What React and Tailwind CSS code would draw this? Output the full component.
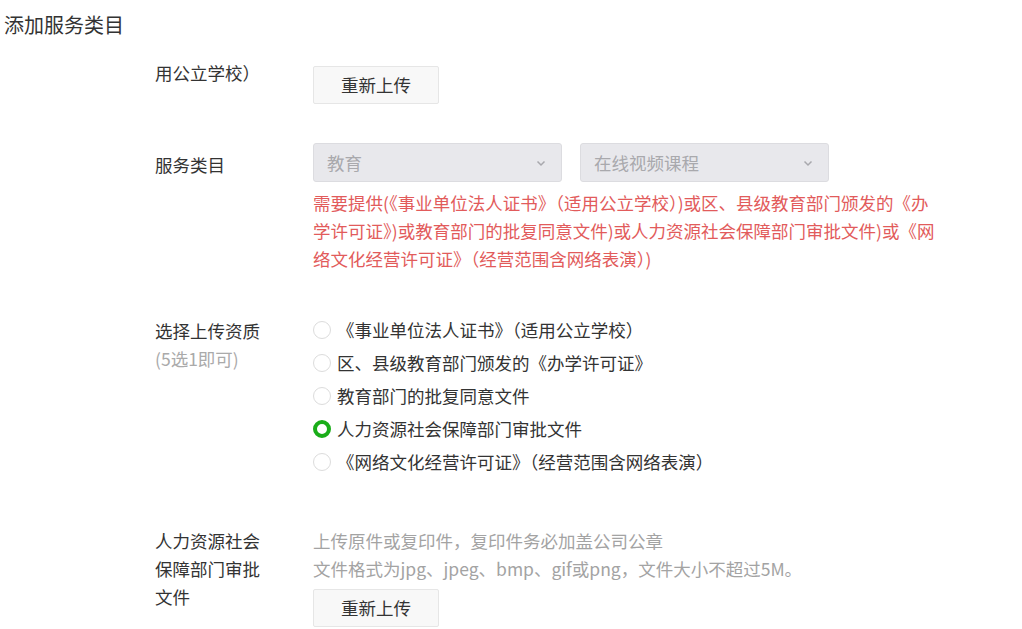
import React, { useState } from "react";

const options = [
  "《事业单位法人证书》（适用公立学校）",
  "区、县级教育部门颁发的《办学许可证》",
  "教育部门的批复同意文件",
  "人力资源社会保障部门审批文件",
  "《网络文化经营许可证》（经营范围含网络表演）",
];

const Chevron = () => (
  <svg width="12" height="12" viewBox="0 0 12 12" fill="none">
    <path d="M2.5 4.5l3.5 3.5 3.5-3.5" stroke="#a8a8ad" strokeWidth="1.5" />
  </svg>
);

const UploadButton = ({ className }) => (
  <button
    className={`h-[38px] w-[126px] rounded-[2px] border border-[#e6e6e6] bg-[#f8f8f8] text-[17.5px] text-[#333] ${className}`}
  >
    重新上传
  </button>
);

const App = () => {
  const [selected, setSelected] = useState(3);

  return (
    <div
      className="min-h-screen w-[1022px] bg-white text-[17.5px] leading-[28px] text-[#333]"
      style={{ fontFamily: '"Noto Sans CJK SC", "Noto Sans", sans-serif' }}
    >
      {/* title */}
      <div className="mt-[11px] pl-[4px] text-[20px] leading-[28px]">
        添加服务类目
      </div>

      <div className="pl-[155px]">
        {/* row: previous upload */}
        <div className="mt-[20px] flex items-start">
          <div className="w-[158px] shrink-0">用公立学校）</div>
          <UploadButton className="mt-[7px]" />
        </div>

        {/* row: service category */}
        <div className="mt-[39px] flex items-start">
          <div className="w-[158px] shrink-0 pt-[8px]">服务类目</div>
          <div>
            <div className="flex gap-[18px]">
              <div className="flex h-[39px] w-[249px] items-center justify-between rounded-[3px] border border-[#dcdce0] bg-[#e8e8ec] pl-[13px] pr-[14px] text-[#a9a9ad]">
                <span>教育</span>
                <Chevron />
              </div>
              <div className="flex h-[39px] w-[249px] items-center justify-between rounded-[3px] border border-[#dcdce0] bg-[#e8e8ec] pl-[13px] pr-[14px] text-[#a9a9ad]">
                <span>在线视频课程</span>
                <Chevron />
              </div>
            </div>
            <div className="mt-[7px] w-[650px] text-[#e25b5b]">
              <div className="whitespace-nowrap">需要提供(《事业单位法人证书》（适用公立学校）)或区、县级教育部门颁发的《办</div>
              <div className="whitespace-nowrap">学许可证》)或教育部门的批复同意文件)或人力资源社会保障部门审批文件)或《网</div>
              <div className="whitespace-nowrap">络文化经营许可证》（经营范围含网络表演）)</div>
            </div>
          </div>
        </div>

        {/* row: qualification choice */}
        <div className="mt-[40px] flex items-start">
          <div className="w-[158px] shrink-0 pt-[4px]">
            <div>选择上传资质</div>
            <div className="text-[#aaa]">(5选1即可)</div>
          </div>
          <div>
            {options.map((opt, i) => (
              <label
                key={i}
                className="flex h-[33px] cursor-pointer items-center"
                onClick={() => setSelected(i)}
              >
                {selected === i ? (
                  <span className="box-border h-[18px] w-[18px] rounded-full border-[4px] border-[#1aad19] bg-white" />
                ) : (
                  <span className="box-border h-[18px] w-[18px] rounded-full border border-[#dcdcdc] bg-white" />
                )}
                <span className="ml-[6px] whitespace-nowrap">{opt}</span>
              </label>
            ))}
          </div>
        </div>

        {/* row: upload file */}
        <div className="mt-[49px] flex items-start">
          <div className="w-[158px] shrink-0 pr-[48px]">人力资源社会保障部门审批文件</div>
          <div>
            <div className="text-[#a3a3a3]">上传原件或复印件，复印件务必加盖公司公章</div>
            <div className="text-[#a3a3a3]">文件格式为jpg、jpeg、bmp、gif或png，文件大小不超过5M。</div>
            <UploadButton className="mt-[6px]" />
          </div>
        </div>
      </div>
    </div>
  );
};

export default App;
